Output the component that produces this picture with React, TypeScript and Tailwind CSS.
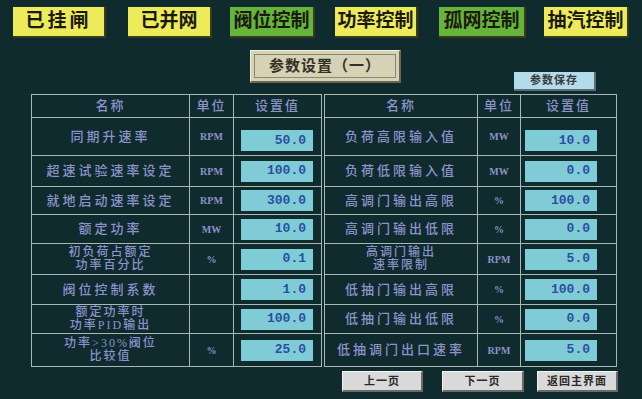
import React from 'react';

const CJK = "font-['Liberation_Serif','Noto_Sans_CJK_SC',serif]";

interface Row {
  name: string[];
  unit: string;
  value: string;
}

const leftRows: Row[] = [
  { name: ['同期升速率'], unit: 'RPM', value: '50.0' },
  { name: ['超速试验速率设定'], unit: 'RPM', value: '100.0' },
  { name: ['就地启动速率设定'], unit: 'RPM', value: '300.0' },
  { name: ['额定功率'], unit: 'MW', value: '10.0' },
  { name: ['初负荷占额定', '功率百分比'], unit: '%', value: '0.1' },
  { name: ['阀位控制系数'], unit: '', value: '1.0' },
  { name: ['额定功率时', '功率PID输出'], unit: '', value: '100.0' },
  { name: ['功率>30%阀位', '比较值'], unit: '%', value: '25.0' },
];

const rightRows: Row[] = [
  { name: ['负荷高限输入值'], unit: 'MW', value: '10.0' },
  { name: ['负荷低限输入值'], unit: 'MW', value: '0.0' },
  { name: ['高调门输出高限'], unit: '%', value: '100.0' },
  { name: ['高调门输出低限'], unit: '%', value: '0.0' },
  { name: ['高调门输出', '速率限制'], unit: 'RPM', value: '5.0' },
  { name: ['低抽门输出高限'], unit: '%', value: '100.0' },
  { name: ['低抽门输出低限'], unit: '%', value: '0.0' },
  { name: ['低抽调门出口速率'], unit: 'RPM', value: '5.0' },
];

const topButtons = [
  { label: '已挂闸', color: 'bg-[#eeeb5a]', cls: 'w-[93px] tracking-[3px]' },
  { label: '已并网', color: 'bg-[#eeeb5a]', cls: 'w-[84px] ml-[22px]' },
  { label: '阀位控制', color: 'bg-[#66b43a]', cls: 'w-[85px] ml-[18px]' },
  { label: '功率控制', color: 'bg-[#eeeb5a]', cls: 'w-[83px] ml-[20px]' },
  { label: '孤网控制', color: 'bg-[#66b43a]', cls: 'w-[87px] ml-[21px]' },
  { label: '抽汽控制', color: 'bg-[#eeeb5a]', cls: 'w-[85px] ml-[18px]' },
];

function ParamTable({ rows, side }: { rows: Row[]; side: 'left' | 'right' }) {
  const cols = side === 'left' ? 'grid-cols-[157px_43px_87px]' : 'grid-cols-[152px_42px_95px]';
  const boxMargin = side === 'left' ? 'ml-[7px]' : 'ml-[4px]';
  return (
    <div className={`grid ${cols} grid-rows-[22px_37px_30px_27px_28px_30px_29px_28px_32px] gap-px bg-[#a9b7b7] p-px`}>
      {['名称', '单位', '设置值'].map(h => (
        <div key={h} className="bg-[#0f2b2d] flex items-center justify-center text-[13px] font-medium tracking-[2px] text-[#8d92cb]">
          {h}
        </div>
      ))}
      {rows.map((r, i) => (
        <React.Fragment key={i}>
          {r.name.length > 1 ? (
            <div className="bg-[#0f2b2d] flex flex-col items-center justify-center text-[12px] leading-[13px] font-medium tracking-[2px] text-[#8d92cb]">
              {r.name.map(n => <span key={n}>{n}</span>)}
            </div>
          ) : (
            <div className="bg-[#0f2b2d] flex items-center justify-center text-[13px] font-medium tracking-[3px] text-[#8d92cb]">
              {r.name[0]}
            </div>
          )}
          <div className="bg-[#0f2b2d] flex items-center justify-center text-[10px] font-bold text-[#8d92cb] font-['Liberation_Serif',serif]">
            {r.unit}
          </div>
          <div className={`bg-[#0f2b2d] flex ${i === 0 ? 'items-end pb-[4px]' : 'items-center'}`}>
            <div className={`${boxMargin} w-[72px] h-[21px] bg-[#7fccd6] flex items-center justify-end pr-[7px] text-[13px] font-bold text-[#2b4ea2] font-['Liberation_Mono',monospace]`}>
              {r.value}
            </div>
          </div>
        </React.Fragment>
      ))}
    </div>
  );
}

export default function App() {
  return (
    <div className={`w-[642px] h-[399px] bg-[#0f2b2d] flex flex-col overflow-hidden ${CJK}`}>
      {/* Status / mode buttons */}
      <div className="flex pl-[13px] pt-[7px]">
        {topButtons.map(b => (
          <div
            key={b.label}
            className={`${b.cls} ${b.color} h-[31px] flex items-center justify-center text-[19px] font-bold text-[#1a1a10] border-r-2 border-b-2 border-[#3a3a20]`}
          >
            {b.label}
          </div>
        ))}
      </div>

      {/* Title + save */}
      <div className="flex items-start h-[56px]">
        <div className="ml-[250px] mt-[12px] w-[151px] h-[33px] bg-[#d6d2b6] border-t border-l border-[#f0eede] border-r-2 border-b-2 border-r-[#6a6850] border-b-[#6a6850] p-[3px]">
          <div className="w-full h-full border border-[#8a8870] flex items-center justify-center text-[15px] font-bold text-[#333325] tracking-[1px]">
            参数设置（一）
          </div>
        </div>
        <div className="ml-[113px] mt-[34px] w-[82px] h-[19px] bg-[#b3dcea] border-r-2 border-b-2 border-[#56707a] flex items-center justify-center text-[11px] font-bold text-[#3a3a3a] tracking-[1px]">
          参数保存
        </div>
      </div>

      {/* Parameter tables */}
      <div className="flex ml-[31px] gap-[2px]">
        <ParamTable rows={leftRows} side="left" />
        <ParamTable rows={rightRows} side="right" />
      </div>

      {/* Navigation */}
      <div className="flex mt-[4px]">
        {[
          { label: '上一页', cls: 'ml-[342px] w-[81px]' },
          { label: '下一页', cls: 'ml-[19px] w-[82px]' },
          { label: '返回主界面', cls: 'ml-[13px] w-[81px]' },
        ].map(b => (
          <div
            key={b.label}
            className={`${b.cls} h-[21px] bg-[#d9d9d9] border-t border-l border-[#f4f4f4] border-r-2 border-b-2 border-r-[#6a6a6a] border-b-[#6a6a6a] flex items-center justify-center text-[11px] font-bold text-[#2a2a2a] tracking-[1px]`}
          >
            {b.label}
          </div>
        ))}
      </div>
    </div>
  );
}
